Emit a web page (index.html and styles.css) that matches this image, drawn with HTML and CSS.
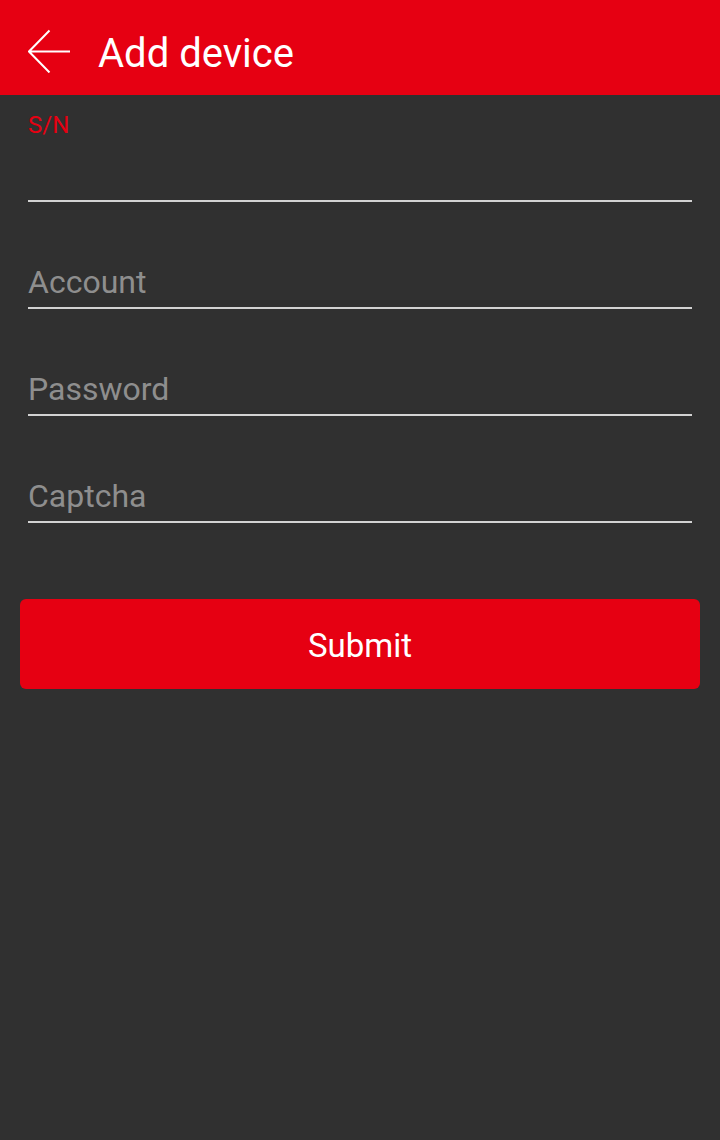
FILE: index.html
```html
<!DOCTYPE html>
<html>
<head>
  <meta charset="UTF-8">
  <meta name="viewport" content="width=device-width, initial-scale=1">
  <title>Add device</title>
  <link rel="stylesheet" href="styles.css">
</head>

<body>
  <header class="topbar">
    <button class="back" type="button" aria-label="Back">
      <svg width="44" height="44" viewBox="0 0 44 44">
        <path d="M1 22.5H42M21.5 1.5L1 22.5L21.5 43.5" fill="none" stroke="#fff" stroke-width="2"/>
      </svg>
    </button>
    <h1 class="title">Add device</h1>
  </header>

  <form class="device-form">
    <!-- serial number, label floated above -->
    <div class="field">
      <label class="field-label" for="sn">S/N</label>
      <input class="field-input" type="text" id="sn" name="sn">
    </div>

    <div class="field">
      <input class="field-input" type="text" id="account" name="account" placeholder="Account">
    </div>

    <div class="field">
      <input class="field-input" type="password" id="password" name="password" placeholder="Password">
    </div>

    <div class="field">
      <input class="field-input" type="text" id="captcha" name="captcha" placeholder="Captcha">
    </div>

    <button class="submit" type="submit">Submit</button>
  </form>
</body>

</html>
```

FILE: styles.css
```css
body {
  margin: 0;
  min-height: 1140px;
  background-color: #303030;
  font-family: Roboto, "Liberation Sans", sans-serif;
}
.topbar {
  display: flex;
  align-items: center;
  box-sizing: border-box;
  height: 95px;
  padding: 6px 0 0 28px;
  background-color: #e60012;
}
.back {
  display: block;
  width: 44px;
  height: 44px;
  padding: 0;
  border: none;
  background: none;
}
.back svg {
  display: block;
}
.title {
  margin: 7px 0 0 26px;
  font-size: 40px;
  line-height: 48px;
  font-weight: 400;
  color: #fff;
}
.device-form {
  display: flex;
  flex-direction: column;
  padding: 0 28px;
}
.field {
  display: flex;
  flex-direction: column;
  justify-content: flex-end;
  box-sizing: border-box;
  height: 107px;
}
.field:first-child {
  justify-content: space-between;
  padding-top: 16px;
}
.field-label {
  font-size: 24px;
  line-height: 28px;
  color: #e60012;
}
.field-input {
  box-sizing: border-box;
  width: 100%;
  height: 47px;
  padding: 0 0 6px;
  border: none;
  border-bottom: 2px solid #d2d2d2;
  background: none;
  font-family: inherit;
  font-size: 32px;
  line-height: 39px;
  color: #fff;
  outline: none;
}
.field-input::placeholder {
  color: #8e8e8e;
}
.submit {
  margin: 76px -8px 0;
  height: 90px;
  padding: 2px 0 0;
  border: none;
  border-radius: 6px;
  background-color: #e60012;
  font-family: inherit;
  font-size: 33px;
  color: #fff;
}
```
